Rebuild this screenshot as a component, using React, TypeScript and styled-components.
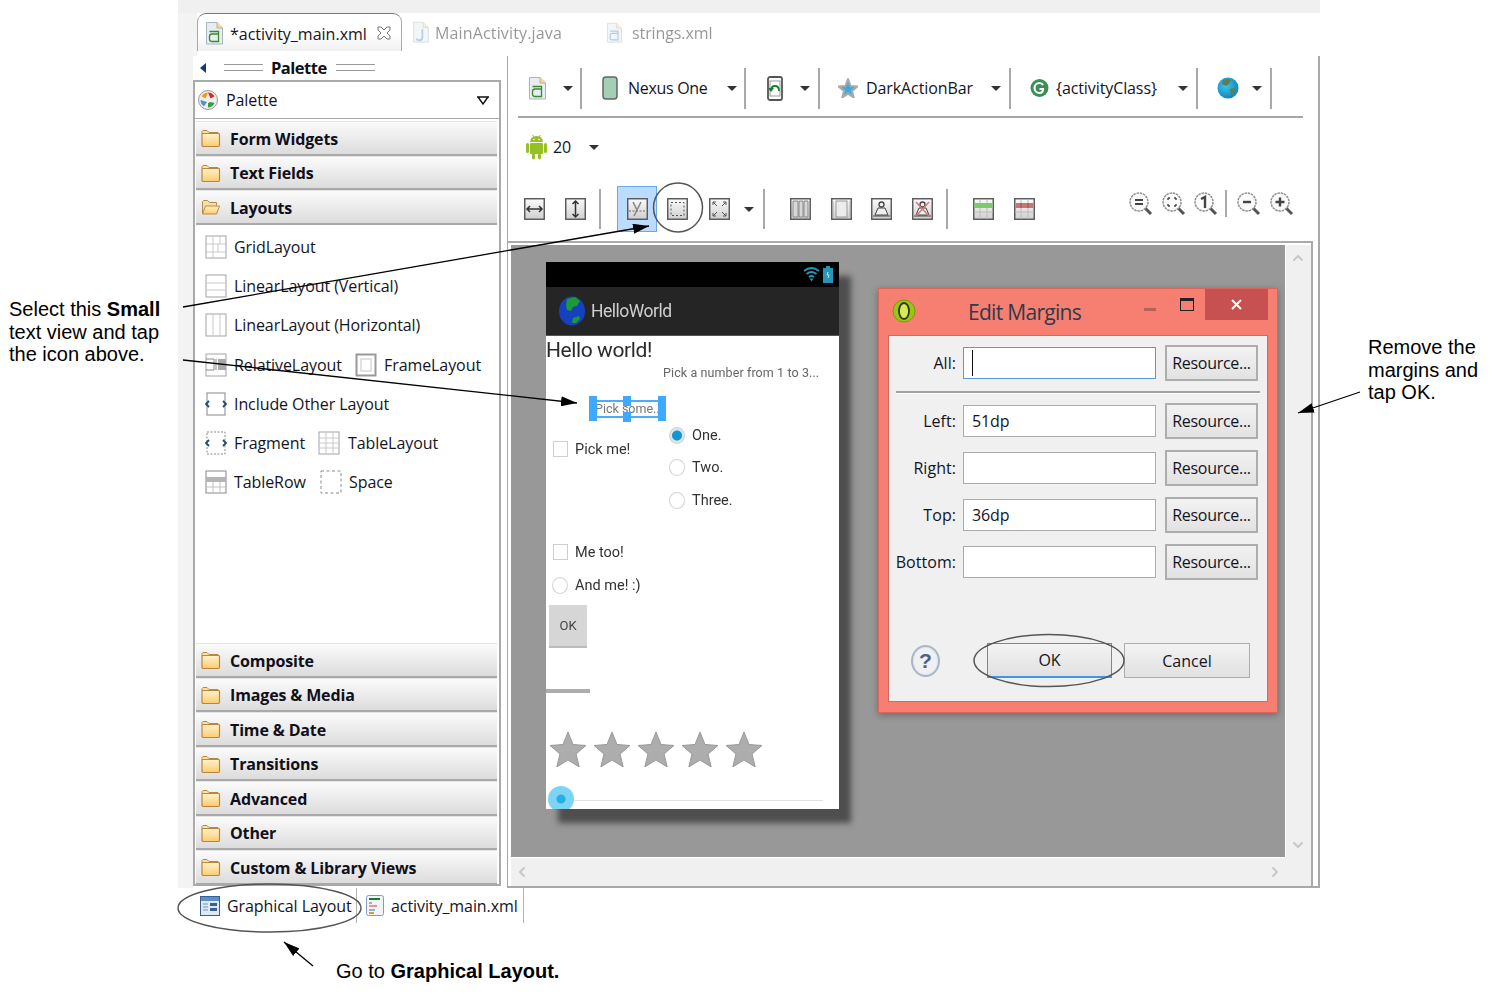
import React from "react";
import styled, { createGlobalStyle } from "styled-components";
import { ChevronUp, ChevronDown, ChevronLeft, ChevronRight } from "lucide-react";

const UI = `"Open Sans", "Noto Sans", sans-serif`;
const Global = createGlobalStyle`
  html, body { margin: 0; padding: 0; background: #fff; }
  body { font-family: ${UI}; color: #14141e; }
  * { box-sizing: border-box; }
`;

const Page = styled.div`
  position: relative; width: 1502px; height: 995px; overflow: hidden; padding-left: 178px;
`;
const Figure = styled.div`width: 1142px; display: flex; flex-direction: column;`;
const TopStrip = styled.div`height: 13px; background: #f0f0f0;`;
const TabBar = styled.div`height: 43px; display: flex; background: #f3f3f3; padding-left: 19px;`;
const TabStrip = styled.div`flex: 1; display: flex; background: #fff; align-items: flex-start;`;
const ActiveTab = styled.div`
  width: 205px; height: 38px; display: flex; align-items: center; padding-left: 8px;
  border: 1px solid #777; border-color: #777 #aaa transparent; border-bottom: 0; border-radius: 9px 9px 0 0;
  background: linear-gradient(#fff 55%, #f0f0f0);
`;
const TabTitle = styled.span`
  font-size: 16px; letter-spacing: ${p => p.$ls ?? 0}px; white-space: nowrap; margin-left: ${p => p.$ml ?? 7}px; width: ${p => p.$w}px;
  line-height: 38px; padding-top: 2px;
`;
const CloseMark = styled.span`display: flex; margin-left: 10px;`;
const InactiveTab = styled.div`
  display: flex; align-items: center; height: 38px; margin-left: ${p => p.$ml}px; opacity: .45;
`;
const Workbench = styled.div`
  height: 832px; display: flex; background: #f3f3f3; padding-left: 15px;
`;
const PalettePane = styled.div`width: 314px; background: #fff; display: flex; flex-direction: column;`;
const PaletteHead = styled.div`height: 24px; display: flex; align-items: center; padding: 0 0 1px 7px;`;
const Ribbon = styled.span`
  display: block; flex: none; width: 39px; height: 7px; margin-left: ${p => p.$ml}px;
  border-top: 1px solid #999; border-bottom: 1px solid #999;
`;
const PaletteTitle = styled.span`font-size: 16.5px; font-weight: 700; letter-spacing: -0.5px; margin-left: 8px; width: 57px; color: #101018;`;
const PaletteBox = styled.div`
  width: 308px; height: 806px; border: 2px solid #aaa;
  display: flex; flex-direction: column;
`;
const Selector = styled.div`
  height: 37px; flex: none; display: flex; align-items: center; padding: 0 9px 0 3px; border-bottom: 1px solid #aaa; margin-bottom: 2px;
`;
const SelectorText = styled.span`flex: 1; font-size: 16px; letter-spacing: -0.08px; margin-left: 8px;`;
const Category = styled.div`
  height: 34.5px; flex: none; display: flex; align-items: center; padding: 2px 0 0 5px;
  margin: 0 2px 0 1px; border-bottom: 2px solid #a9a9a9; border-top: 1px solid #e4e4e4;
  background: linear-gradient(#fbfbfb, #dcdcdc);
`;
const CategoryText = styled.span`font-size: 16px; font-weight: 700; letter-spacing: -0.14px; margin-left: 9px; color: #10101a;`;
const Items = styled.div`height: 418.5px; flex: none; padding: 3px 0 0 10px; display: flex; flex-direction: column;`;
const ItemRow = styled.div`height: 39.2px; flex: none; display: flex; align-items: center;`;
const ItemText = styled.span`
  font-size: 16px; letter-spacing: -0.08px; margin-left: ${p => p.$ml ?? 7}px; width: ${p => p.$w ?? "auto"}; white-space: nowrap;
`;
const ItemIcon = styled.span`display: flex; margin-left: ${p => p.$ml ?? 0}px;`;

const Editor = styled.div`
  width: 813px; background: #fff; border-left: 1px solid #a8a8a8; border-right: 2px solid #a8a8a8; border-bottom: 2px solid #a8a8a8;
  display: flex; flex-direction: column;
`;
const ToolRowOne = styled.div`
  height: 53px; margin-top: 7px; padding: 0 0 3px 21px; display: flex; align-items: center;
`;
const Rule = styled.div`height: 2px; flex: none; margin: 0 15px 0 10px; background: #a6a6a6;`;
const ToolRowTwo = styled.div`height: 58px; flex: none; padding: 0 0 0 17px; display: flex; align-items: center;`;
const ToolRowThree = styled.div`height: 65px; display: flex; align-items: center; padding: 1px 0 0 7px; flex: none;`;
const Cell = styled.span`display: flex; align-items: center; justify-content: center; margin-left: ${p => p.$ml ?? 0}px;`;
const Slot = styled.span`
  display: flex; align-items: center; justify-content: center; flex: none; width: ${p => p.$w ?? 40}px; margin-left: ${p => p.$ml ?? 0}px;
`;
const SelectedSlot = styled(Slot)`
  height: 46px; background: #bcdcff; border: 1px solid #6aa9ea;
`;
const ToolLabel = styled.span`
  font-size: 16px; letter-spacing: ${p => p.$ls ?? -0.1}px; white-space: nowrap; margin-left: ${p => p.$ml}px; width: ${p => p.$w}px;
`;
const Caret = styled.span`
  flex: none; width: 0; height: 0; margin-left: ${p => p.$ml}px;
  border-left: 5px solid transparent; border-right: 5px solid transparent; border-top: 5px solid #333;
`;
const Sep = styled.span`
  flex: none; width: 2px; height: ${p => p.$h ?? 41}px; background: #a9a9a9; margin-left: ${p => p.$ml}px;
`;
const ZoomGroup = styled.div`display: flex; align-items: center; margin: 0 0 11px 0; height: 30px;`;
const CanvasFrame = styled.div`
  width: 805px; height: 645px; flex: none; border-top: 2px solid #aaa; border-right: 2px solid #aaa; padding: 2px 0 0 3px; background: #fff;
`;
const CanvasGrid = styled.div`
  display: grid; grid-template-columns: 775px 24px; grid-template-rows: 613px 28px; background: #f0f0f0; height: 100%;
`;
const Canvas = styled.div`
  grid-column: 1; grid-row: 1;
  background: #989898; display: flex; align-items: flex-start; padding: 17px 0 0 35px; gap: 39px;
  border-right: 1px solid #fff; border-bottom: 1px solid #fff;
`;
const VScroll = styled.div`
  grid-column: 2; grid-row: 1 / span 2; display: flex; flex-direction: column; justify-content: space-between; align-items: center; padding: 5px 1px 33px 0; color: #c8c8c8;
`;
const HScroll = styled.div`
  grid-column: 1; grid-row: 2; display: flex; align-items: center; justify-content: space-between; padding: 0 3px 0 3px; color: #c8c8c8;
`;

/* phone */
const Phone = styled.div`
  width: 293px; height: 547px; flex: none; box-shadow: 12px 14px 6px #4e4e4e;
`;
const Screen = styled.div`
  width: 293px; height: 547px; overflow: hidden; background: #fff; filter: blur(.35px); display: flex; flex-direction: column;
  font-family: Roboto, "Liberation Sans", sans-serif;
`;
const StatusBar = styled.div`
  height: 25px; flex: none; background: #000; display: flex; justify-content: flex-end; align-items: center; padding-right: 6px; gap: 3px;
`;
const ActionBar = styled.div`
  height: 49px; flex: none; background: #252525; border-bottom: 1px solid #555; display: flex; align-items: center; padding-left: 13px;
`;
const ActionTitle = styled.span`color: #cfcfcf; font-size: 17.5px; margin-left: 6px; letter-spacing: -0.5px;`;
const Hello = styled.div`height: 28px; flex: none; font-size: 21px; line-height: 28px; color: #2a2a2a; letter-spacing: -0.4px; white-space: nowrap;`;
const Hint = styled.div`height: 16px; flex: none; padding-left: 117px; font-size: 12.5px; line-height: 18px; color: #666; letter-spacing: .1px; white-space: nowrap;`;
const Selected = styled.div`
  position: relative; flex: none; width: 76px; height: 25px; margin: 16px 0 0 43px; display: flex; align-items: center; padding-left: 6px;
  font-size: 12.5px; color: #777; white-space: nowrap;
  &::before { content: ""; position: absolute; left: 1px; right: 1px; top: 4px; bottom: 3px; border: 2px solid #48aefc; }
`;
const Handle = styled.span`
  position: absolute; background: #3fa9ff; width: 8px;
  left: ${p => p.$x}px; top: ${p => p.$y}px; height: ${p => p.$h}px;
`;
const Columns = styled.div`height: 97.5px; flex: none; display: flex;`;
const LeftColumn = styled.div`width: 123px; padding: 14px 0 0 7px;`;
const RightColumn = styled.div`display: flex; flex-direction: column; gap: 4.5px;`;
const Choice = styled.div`
  height: 28px; flex: none; display: flex; align-items: center; margin-left: ${p => p.$ml ?? 0}px; margin-top: ${p => p.$mt ?? 0}px;
  font-size: 14.5px; color: #333; white-space: nowrap;
`;
const Check = styled.span`flex: none; width: 15px; height: 16px; border: 1px solid #cfcfcf; margin-right: 7px;`;
const Radio = styled.span`
  flex: none; width: 16px; height: 17px; border-radius: 50%; border: 1px solid #d2d2d2; margin-right: ${p => p.$mr}px;
  background: ${p => p.$on ? "radial-gradient(circle, #1396cf 0 4.5px, #d8e6ee 5.5px)" : "#fff"};
`;
const PhoneButton = styled.div`
  flex: none; width: 38px; height: 43px; margin: 6px 0 0 3px; background: #d6d6d6; border-bottom: 2px solid #bbb;
  display: flex; align-items: center; justify-content: center; font-size: 13px; color: #444;
`;
const Progress = styled.div`flex: none; width: 44px; height: 4px; margin-top: 41px; background: #acacac;`;
const Stars = styled.div`flex: none; display: flex; margin: 38px 0 0 4px; gap: 8px;`;
const Seek = styled.div`position: relative; flex: none; height: 26px; margin: 19px 0 0 2px;`;
const SeekTrack = styled.div`position: absolute; left: 13px; width: 262px; top: 14px; height: 1px; background: #e2e2e2;`;
const SeekThumb = styled.div`
  position: absolute; left: 0; top: 0; width: 26px; height: 26px; border-radius: 50%;
  background: radial-gradient(circle, #27aee8 0 4px, #7dd3f2 5px);
`;

/* dialog */
const Dialog = styled.div`
  width: 400px; height: 425px; flex: none; margin-top: 26px; background: #f77f72; border: 1px solid #d9655b; box-shadow: 0 2px 7px rgba(0,0,0,.3);
  display: flex; flex-direction: column;
`;
const TitleBar = styled.div`height: 46px; flex: none; display: flex; align-items: flex-start; padding-left: 13px;`;
const TitleIcon = styled.span`display: flex; margin-top: 10px;`;
const DialogTitle = styled.span`
  font-size: 21px; letter-spacing: -0.7px; color: #2f3a4a; width: 176px; margin: 5px 0 0 52px; white-space: nowrap; line-height: 36px;
`;
const WinMin = styled.span`flex: none; width: 12px; height: 3px; background: #b8605a; margin: 19px 0 0 0;`;
const WinMax = styled.span`flex: none; width: 14px; height: 13px; border: 1px solid #222; border-top-width: 3px; margin: 9px 0 0 24px;`;
const WinClose = styled.span`
  flex: none; width: 63px; height: 31px; background: #c75050; margin-left: 11px; display: flex; align-items: center; justify-content: center;
`;
const DialogBody = styled.div`
  flex: 1; margin: 0 9px 10px 9px; background: #f0f0f0; border: 1px solid #cf6a60; padding-top: 9px; display: flex; flex-direction: column;
`;
const FieldRow = styled.div`height: 36px; flex: none; display: flex; align-items: center; margin-bottom: ${p => p.$mb ?? 11}px;`;
const FieldLabel = styled.span`width: 67px; text-align: right; font-size: 16px; letter-spacing: 0.05px; white-space: nowrap;`;
const FieldInput = styled.div`
  width: 193px; height: 32px; margin-left: 7px; background: #fff; border: 1px solid ${p => p.$focus ? "#5b9bd5" : "#ababab"};
  padding-left: 8px; font-size: 16px; letter-spacing: -0.1px; display: flex; align-items: center;
`;
const TextCaret = styled.span`display: block; width: 1px; height: 26px; background: #111;`;
const ResourceButton = styled.div`
  width: 93px; height: 36px; margin-left: 9px; border: 2px solid #adadad; background: linear-gradient(#f2f2f2, #e2e2e2);
  display: flex; align-items: center; justify-content: center; font-size: 16px; letter-spacing: -0.3px;
`;
const Divider = styled.div`height: 3px; flex: none; margin: 10px 7px 9px; border-top: 2px solid #a0a0a0; border-bottom: 1px solid #fff;`;
const ButtonRow = styled.div`display: flex; align-items: center; margin-top: 63px; padding-left: 22px;`;
const Help = styled.span`
  width: 29px; height: 32px; border-radius: 50%; border: 2px solid #a9b6c8; box-shadow: inset 0 0 0 1px #dfe6ef;
  display: flex; align-items: center; justify-content: center; font: 700 21px "Liberation Sans", sans-serif; color: #4c6186;
`;
const DialogButton = styled.div`
  width: ${p => p.$w}px; height: 35px; margin-left: ${p => p.$ml}px; border: 1px solid ${p => p.$primary ? "#3d95ee" : "#adadad"};
  border-bottom-width: ${p => p.$primary ? 2 : 1}px;
  background: linear-gradient(#f3f3f3, #e1e1e1); display: flex; align-items: center; justify-content: center; font-size: 16px;
`;

/* bottom tabs */
const BottomTabs = styled.div`height: 35px; padding-left: 22px; display: flex; align-items: stretch;`;
const BottomTab = styled.div`
  display: flex; align-items: center; width: ${p => p.$w}px; padding-left: ${p => p.$pl}px; border-right: 1px solid #b5b5b5;
`;
const BottomLabel = styled.span`font-size: 16px; letter-spacing: -0.08px; margin-left: 7px; white-space: nowrap;`;

/* annotations */
const Callout = styled.div`
  position: absolute; left: ${p => p.$x}px; top: ${p => p.$y}px; font: 20px/22.5px "Liberation Sans", Arial, sans-serif; color: #000; white-space: nowrap;
  b { font-weight: 700; }
`;
const Overlay = styled.svg`position: absolute; left: 0; top: 0; pointer-events: none;`;

/* icons */
const Folder = ({ open }: { open?: boolean }) => (
  <svg width="20" height="21" viewBox="0 0 20 21">
    <defs><linearGradient id="fg" x1="0" y1="0" x2="0" y2="1"><stop offset="0" stopColor="#fff3cc" /><stop offset="1" stopColor="#fccb70" /></linearGradient></defs>
    {open ? <>
      <path d="M1.5 17V4.5l1-1h4l2 2h7v3" fill="#f4dfa9" stroke="#b98a48" />
      <path d="M1.5 17l3-8h14l-3 8z" fill="url(#fg)" stroke="#b98a48" />
    </> : <>
      <path d="M1 6V3.5l1-1h4l2 2h9l1 1V8z" fill="#f8e2ab" stroke="#bd853b" />
      <rect x="1" y="5.5" width="17.5" height="13" rx="1.2" fill="url(#fg)" stroke="#bd853b" strokeWidth="1.2" />
    </>}
  </svg>
);
const Doc = ({ color = "#3b8a2e", w = 17, h = 24, j }: { color?: string; w?: number; h?: number; j?: boolean }) => (
  <svg width={w} height={h} viewBox="0 0 17 24">
    <path d="M.5 1.5h10.5l5.500 5.500v16H.5z" fill="#e6edf3" stroke="#a9b5bd" />
    <path d="M11 1.500v5.500h5.500" fill="#f4d7b0" stroke="#d9a873" />
    {j ? <path d="M10 9v9q0 3-3 3t-3-2" fill="none" stroke="#6f93bd" strokeWidth="2" /> :
      <path d="M3.500 10.500h9v10H6q-2.500 0-2.500-2.500v-2.500Q3.500 13 6 13h6.500" fill="none" stroke={color} strokeWidth="1.300" />}
  </svg>
);
const Box = ({ children }: { children?: React.ReactNode }) => (
  <svg width="21" height="22" viewBox="0 0 21 22">
    <defs><linearGradient id="bx" x1="0" y1="0" x2="0" y2="1"><stop offset="0" stopColor="#fbfbfb" /><stop offset="1" stopColor="#cfcfcf" /></linearGradient></defs>
    <rect x=".75" y=".75" width="19.500" height="20.500" fill="url(#bx)" stroke="#555" strokeWidth="1.400" />
    {children}
  </svg>
);
const Mag = ({ children }: { children?: React.ReactNode }) => (
  <svg width="24" height="24" viewBox="0 0 24 24">
    <path d="M15 15l7 7" stroke="#555" strokeWidth="3" />
    <circle cx="10" cy="10" r="9" fill="#fafafa" stroke="#8d8d8d" strokeWidth="1.500" strokeDasharray="2.500 .8" />
    {children}
  </svg>
);
const Plain = ({ children }: { children: React.ReactNode }) => (
  <svg width="22" height="24" viewBox="0 0 22 24" fill="none" stroke="#a3a3a3">{children}</svg>
);
const Star = ({ s = 36, fill = "#adadad", line = "#999" }: { s?: number; fill?: string; line?: string }) => (
  <svg width={s} height={s} viewBox="0 0 36 36"><path d="M18 1l5 12.500 13 1-10 8.500 3.200 13L18 29 6.800 36 10 23 0 14.500l13-1z" fill={fill} stroke={line} /></svg>
);
const GlobeBlue = () => (
  <svg width="22" height="24" viewBox="0 0 22 24">
    <defs><radialGradient id="gl" cx=".4" cy=".4" r=".7"><stop offset="0" stopColor="#3fc4ea" /><stop offset="1" stopColor="#0a7fb8" /></radialGradient></defs>
    <circle cx="11" cy="12" r="10.500" fill="url(#gl)" />
    <path d="M6 4q4-2 8 0l-2 4-3 2-4-2zM13 13l5-1-1 5-3 3z" fill="#5f7f52" />
  </svg>
);
const Android = () => (
  <svg width="23" height="26" viewBox="0 0 23 26" fill="#97c024">
    <path d="M5 8q.5-6 6.500-6T18 8z" />
    <path d="M7.500 1l1.500 2M15.500 1L14 3" stroke="#97c024" />
    <rect x="5" y="9" width="13" height="11" rx="1" />
    <rect x="1" y="9" width="3" height="10" rx="1.500" />
    <rect x="19" y="9" width="3" height="10" rx="1.500" />
    <rect x="7" y="19" width="3" height="6.500" rx="1.400" />
    <rect x="13" y="19" width="3" height="6.500" rx="1.400" />
    <circle cx="9" cy="5.500" r=".8" fill="#fff" /><circle cx="14" cy="5.500" r=".8" fill="#fff" />
  </svg>
);

const categoriesBottom = ["Composite", "Images & Media", "Time & Date", "Transitions", "Advanced", "Other", "Custom & Library Views"];

export default function App() {
  return (
    <Page>
      <Global />
      <Figure>
        <TopStrip />
        <TabBar>
          <TabStrip>
            <ActiveTab>
              <Doc />
              <TabTitle>*activity_main.xml</TabTitle>
              <CloseMark>
                <svg width="14" height="14" viewBox="0 0 14 14"><path d="M1 1h3l3 3 3-3h3v3l-3 3 3 3v3h-3l-3-3-3 3H1v-3l3-3-3-3z" fill="#fff" stroke="#777" /></svg>
              </CloseMark>
            </ActiveTab>
            <InactiveTab $ml={11}><Doc j w={16} h={22} /><TabTitle $ml={6} $w={127} $ls={0.15}>MainActivity.java</TabTitle></InactiveTab>
            <InactiveTab $ml={45}><Doc w={15} h={21} color="#5a8ac0" /><TabTitle $ml={10} $w={80} $ls={-0.1}>strings.xml</TabTitle></InactiveTab>
          </TabStrip>
        </TabBar>
        <Workbench>
          <PalettePane>
            <PaletteHead>
              <svg width="7" height="12" viewBox="0 0 7 12"><path d="M6 1v10L0 6z" fill="#103d6e" /></svg>
              <Ribbon $ml={17} />
              <PaletteTitle>Palette</PaletteTitle>
              <Ribbon $ml={8} />
            </PaletteHead>
            <PaletteBox>
              <Selector>
                <svg width="20" height="20" viewBox="0 0 20 20">
                  <circle cx="10" cy="10" r="9.500" fill="#eee" stroke="#999" />
                  <path d="M10 2.500a7.500 7.500 0 00-6.500 3.800l4 2.200z" fill="#e8a010" /><path d="M10 2.500a7.500 7.500 0 016.500 3.800l-4 2.200z" fill="#d9281e" />
                  <path d="M2.500 10a7.500 7.500 0 003.500 6.300l3-4.300z" fill="#4f8fd0" /><path d="M10 17.500a7.500 7.500 0 006.500-4.500l-4-1-2.500 1z" fill="#35a035" />
                </svg>
                <SelectorText>Palette</SelectorText>
                <svg width="14" height="9" viewBox="0 0 14 9"><path d="M1 1h12M2 1l5 7 5-7" fill="none" stroke="#111" strokeWidth="1.400" /></svg>
              </Selector>
              <Category><Folder /><CategoryText>Form Widgets</CategoryText></Category>
              <Category><Folder /><CategoryText>Text Fields</CategoryText></Category>
              <Category><Folder open /><CategoryText>Layouts</CategoryText></Category>
              <Items>
                <ItemRow>
                  <Plain><rect x="1" y="1" width="20" height="22" /><path d="M1 9h20M1 17h20M8 1v22M15 1v8M13 9v8" stroke="#c9c9c9" /></Plain>
                  <ItemText>GridLayout</ItemText>
                </ItemRow>
                <ItemRow>
                  <Plain><rect x="1" y="1" width="20" height="22" /><path d="M1 9h20M1 16h20" stroke="#c9c9c9" /></Plain>
                  <ItemText>LinearLayout (Vertical)</ItemText>
                </ItemRow>
                <ItemRow>
                  <Plain><rect x="1" y="1" width="20" height="22" /><path d="M8 1v22M15 1v22" stroke="#c9c9c9" /></Plain>
                  <ItemText>LinearLayout (Horizontal)</ItemText>
                </ItemRow>
                <ItemRow>
                  <Plain><rect x="1" y="1" width="20" height="22" /><rect x="13" y="6" width="8" height="11" fill="#a9a9a9" stroke="none" /><path d="M1 6h8v11H1M11 6v11" stroke="#8a8a8a" /></Plain>
                  <ItemText $w="121px">RelativeLayout</ItemText>
                  <ItemIcon><Plain><rect x="1.500" y="1.500" width="19" height="21" strokeWidth="2" stroke="#999" /><rect x="6" y="6" width="10" height="12" stroke="#c6c6c6" /></Plain></ItemIcon>
                  <ItemText>FrameLayout</ItemText>
                </ItemRow>
                <ItemRow>
                  <Plain><rect x="2" y="1" width="18" height="22" stroke="#888" /><path d="M4 9l-3 3 3 3M18 9l3 3-3 3" stroke="#1f4a66" strokeWidth="1.800" /></Plain>
                  <ItemText>Include Other Layout</ItemText>
                </ItemRow>
                <ItemRow>
                  <Plain><rect x="2" y="1" width="18" height="22" strokeDasharray="2 1.500" stroke="#888" /><path d="M4 9l-3 3 3 3M18 9l3 3-3 3" stroke="#1f4a66" strokeWidth="1.800" /></Plain>
                  <ItemText $w="84px">Fragment</ItemText>
                  <ItemIcon><Plain><rect x="1" y="1" width="20" height="22" /><path d="M1 7h20M1 12h20M1 17h20M8 1v22M15 1v22" stroke="#c9c9c9" /></Plain></ItemIcon>
                  <ItemText $ml={8}>TableLayout</ItemText>
                </ItemRow>
                <ItemRow>
                  <Plain><rect x="1" y="1" width="20" height="22" stroke="#888" /><rect x="1" y="7" width="20" height="5" fill="#b4b4b4" stroke="none" /><path d="M1 17h20M8 12v11M15 12v11" stroke="#c0c0c0" /></Plain>
                  <ItemText $w="86px">TableRow</ItemText>
                  <ItemIcon><Plain><rect x="1" y="1" width="20" height="22" strokeDasharray="3 2.500" stroke="#888" /></Plain></ItemIcon>
                  <ItemText>Space</ItemText>
                </ItemRow>
              </Items>
              {categoriesBottom.map(c => (
                <Category key={c}><Folder /><CategoryText>{c}</CategoryText></Category>
              ))}
            </PaletteBox>
          </PalettePane>
          <Editor>
            <ToolRowOne>
              <Cell><Doc /></Cell>
              <Caret $ml={17} /><Sep $ml={7} />
              <Cell $ml={20}>
                <svg width="16" height="24" viewBox="0 0 16 24"><rect x="1" y="1" width="14" height="22" rx="3" fill="#a5cfb4" stroke="#666" strokeWidth="1.500" /></svg>
              </Cell>
              <ToolLabel $ml={10} $w={80} $ls={-0.3}>Nexus One</ToolLabel>
              <Caret $ml={19} /><Sep $ml={7} />
              <Cell $ml={21}>
                <svg width="16" height="25" viewBox="0 0 16 25" fill="none"><rect x="1" y="1" width="14" height="23" rx="2" stroke="#555" strokeWidth="1.800" /><rect x="3" y="5" width="10" height="15" stroke="#999" /><path d="M12 15q0-5-4-5t-4 5" stroke="#16812a" strokeWidth="1.800" /><path d="M1 12l3 4 3-4z" fill="#16812a" /></svg>
              </Cell>
              <Caret $ml={17} /><Sep $ml={8} />
              <Cell $ml={18}>
                <svg width="20" height="20" viewBox="0 0 36 36"><path d="M18 3l4.500 11.500 11.500 1-9 7.500 3 11.500L18 28 8 34.500l3-11.500-9-7.500 11.500-1z" fill="#3fa9dc" stroke="#a3aab0" strokeWidth="4" /></svg>
              </Cell>
              <ToolLabel $ml={8} $w={106}>DarkActionBar</ToolLabel>
              <Caret $ml={19} /><Sep $ml={8} />
              <Cell $ml={19}>
                <svg width="19" height="20" viewBox="0 0 19 20"><circle cx="9.500" cy="10" r="9" fill="#3a8f55" /><path d="M13 7q-1-2-3.500-2a5 5 0 100 10q3.500 0 3.500-4H9.500" fill="none" stroke="#fff" strokeWidth="2.200" /></svg>
              </Cell>
              <ToolLabel $ml={7} $w={103}>{"{activityClass}"}</ToolLabel>
              <Caret $ml={19} /><Sep $ml={8} />
              <Cell $ml={19}><GlobeBlue /></Cell>
              <Caret $ml={13} /><Sep $h={41} $ml={8} />
            </ToolRowOne>
            <Rule />
            <ToolRowTwo>
              <Cell><Android /></Cell>
              <ToolLabel $ml={5} $w={20}>20</ToolLabel>
              <Caret $ml={16} />
            </ToolRowTwo>
            <ToolRowThree>
              <Slot $w={39}><Box><path d="M3 11h15M6 8l-3 3 3 3M15 8l3 3-3 3" fill="none" stroke="#333" strokeWidth="1.500" /></Box></Slot>
              <Slot $ml={1}><Box><path d="M10.500 3v16M7.500 6l3-3 3 3M7.500 16l3 3 3-3" fill="none" stroke="#333" strokeWidth="1.500" /></Box></Slot>
              <Sep $h={40} $ml={4} />
              <SelectedSlot $ml={16}><Box><path d="M6 4l4 8M14 4l-7 14" fill="none" stroke="#888" strokeWidth="1.600" /><path d="M2 13h17" stroke="#666" strokeDasharray="2 1.500" /></Box></SelectedSlot>
              <Slot><Box><rect x="4" y="4.500" width="13" height="13" fill="none" stroke="#555" strokeDasharray="2 2" /></Box></Slot>
              <Slot $ml={2}><Box><path d="M4 4l4 4M17 4l-4 4M4 18l4-4M17 18l-4-4M4 4h3M4 4v3M17 4h-3M17 4v3M4 18h3M4 18v-3M17 18h-3M17 18v-3" fill="none" stroke="#555" /></Box></Slot>
              <Caret $ml={5} /><Sep $h={40} $ml={9} />
              <Slot $ml={15}><Box><path d="M3 3h5v16H3zM9 3h4v16H9zM14 3h4v16h-4z" fill="#d8d8d8" stroke="#888" /></Box></Slot>
              <Slot $ml={1}><Box><rect x="5" y="3" width="11" height="16" fill="#ececec" stroke="#999" /><path d="M2 3v16M19 3v16" stroke="#aaa" /></Box></Slot>
              <Slot><Box><circle cx="10.500" cy="6.500" r="2.500" fill="none" stroke="#444" strokeWidth="1.300" /><path d="M4 17l3-7h7l3 7zM2 18h17" fill="#eee" stroke="#444" /></Box></Slot>
              <Slot $ml={1}><Box><circle cx="10.500" cy="6.500" r="2.500" fill="none" stroke="#444" strokeWidth="1.300" /><path d="M4 17l3-7h7l3 7zM2 18h17" fill="#eee" stroke="#444" /><path d="M4 4l13 14M17 4L4 18" stroke="#d07878" strokeWidth="1.500" /></Box></Slot>
              <Sep $h={40} $ml={4} />
              <Slot $ml={15}><Box><path d="M1 7h19M1 14h19M7 1v20M14 1v20" stroke="#bbb" /><rect x="1.500" y="5" width="18" height="5" fill="#7cca6c" /></Box></Slot>
              <Slot $ml={1}><Box><path d="M1 7h19M1 14h19M7 1v20M14 1v20" stroke="#bbb" /><rect x="1.500" y="5" width="18" height="5" fill="#cf7272" /><path d="M7 5v5M14 5v5" stroke="#666" /></Box></Slot>
              <Slot $ml={85} $w={24}>
                <ZoomGroup><Mag><path d="M6 8h8M6 12h8" stroke="#444" strokeWidth="2" /></Mag></ZoomGroup>
              </Slot>
              <Slot $ml={9} $w={24}>
                <ZoomGroup><Mag><path d="M6 6h2M12 6h2M6 14h2M12 14h2M6 6v2M14 6v2M6 12v2M14 12v2" stroke="#444" strokeWidth="1.400" /></Mag></ZoomGroup>
              </Slot>
              <Slot $ml={8} $w={24}>
                <ZoomGroup><Mag><path d="M7 7l4-2v11" fill="none" stroke="#444" strokeWidth="2.400" /></Mag></ZoomGroup>
              </Slot>
              <Slot $ml={7} $w={2}><ZoomGroup><Sep $h={27} $ml={0} /></ZoomGroup></Slot>
              <Slot $ml={10} $w={24}>
                <ZoomGroup><Mag><path d="M6 10h8" stroke="#444" strokeWidth="2.400" /></Mag></ZoomGroup>
              </Slot>
              <Slot $ml={9} $w={24}>
                <ZoomGroup><Mag><path d="M5.500 10h9M10 5.500v9" stroke="#444" strokeWidth="2.400" /></Mag></ZoomGroup>
              </Slot>
            </ToolRowThree>
            <CanvasFrame>
              <CanvasGrid>
                <Canvas>
                  <Phone>
                    <Screen>
                      <StatusBar>
                        <svg width="17" height="15" viewBox="0 0 17 15" fill="none" stroke="#2596b8" strokeWidth="1.800"><path d="M1 4q7.500-6 15 0M3.500 7q5-4 10 0M6 10q2.500-2 5 0" /><path d="M6.500 11.500h4L8.500 14.500z" fill="#2596b8" stroke="none" /></svg>
                        <svg width="10" height="17" viewBox="0 0 10 17"><path d="M3 0h4v2h3v15H0V2h3z" fill="#2596b8" /><path d="M5 6l-1 3h2l-1 3" stroke="#bfe6f2" fill="none" /></svg>
                      </StatusBar>
                      <ActionBar>
                        <svg width="26" height="30" viewBox="0 0 26 30">
                          <ellipse cx="13" cy="15" rx="13" ry="14.500" fill="#1540c0" />
                          <path d="M8 3l8-2 5 4-3 5-4 1-2 4-4-1-1-5zM14 22l6-2 1 3-4 4-4 0z" fill="#1d9a33" />
                        </svg>
                        <ActionTitle>HelloWorld</ActionTitle>
                      </ActionBar>
                      <Hello>Hello world!</Hello>
                      <Hint>Pick a number from 1 to 3...</Hint>
                      <Selected>
                        Pick some..
                        <Handle $x={0} $y={0} $h={25} /><Handle $x={34} $y={0} $h={10} /><Handle $x={34} $y={16} $h={10} /><Handle $x={69} $y={0} $h={25} />
                      </Selected>
                      <Columns>
                        <LeftColumn><Choice><Check />Pick me!</Choice></LeftColumn>
                        <RightColumn>
                          <Choice><Radio $on $mr={7} />One.</Choice>
                          <Choice><Radio $mr={7} />Two.</Choice>
                          <Choice><Radio $mr={7} />Three.</Choice>
                        </RightColumn>
                      </Columns>
                      <Choice $ml={7} $mt={19.5}><Check />Me too!</Choice>
                      <Choice $ml={6} $mt={5}><Radio $mr={7} />And me! :)</Choice>
                      <PhoneButton>OK</PhoneButton>
                      <Progress />
                      <Stars><Star /><Star /><Star /><Star /><Star /></Stars>
                      <Seek><SeekTrack /><SeekThumb /></Seek>
                    </Screen>
                  </Phone>
                  <Dialog>
                    <TitleBar>
                      <TitleIcon>
                        <svg width="24" height="24" viewBox="0 0 24 24"><circle cx="12" cy="12" r="11" fill="#9cc414" stroke="#7a9a10" /><ellipse cx="12" cy="12" rx="5" ry="8" fill="#d9e85a" stroke="#2b3a10" strokeWidth="1.800" /></svg>
                      </TitleIcon>
                      <DialogTitle>Edit Margins</DialogTitle>
                      <WinMin />
                      <WinMax />
                      <WinClose>
                        <svg width="11" height="11" viewBox="0 0 11 11"><path d="M1 1l9 9M10 1l-9 9" stroke="#fff" strokeWidth="2" /></svg>
                      </WinClose>
                    </TitleBar>
                    <DialogBody>
                      <FieldRow $mb={0}><FieldLabel>All:</FieldLabel><FieldInput $focus><TextCaret /></FieldInput><ResourceButton>Resource...</ResourceButton></FieldRow>
                      <Divider />
                      <FieldRow><FieldLabel>Left:</FieldLabel><FieldInput>51dp</FieldInput><ResourceButton>Resource...</ResourceButton></FieldRow>
                      <FieldRow><FieldLabel>Right:</FieldLabel><FieldInput /><ResourceButton>Resource...</ResourceButton></FieldRow>
                      <FieldRow><FieldLabel>Top:</FieldLabel><FieldInput>36dp</FieldInput><ResourceButton>Resource...</ResourceButton></FieldRow>
                      <FieldRow $mb={0}><FieldLabel>Bottom:</FieldLabel><FieldInput /><ResourceButton>Resource...</ResourceButton></FieldRow>
                      <ButtonRow>
                        <Help>?</Help>
                        <DialogButton $primary $w={125} $ml={47}>OK</DialogButton>
                        <DialogButton $w={126} $ml={12}>Cancel</DialogButton>
                      </ButtonRow>
                    </DialogBody>
                  </Dialog>
                </Canvas>
                <VScroll><ChevronUp size={16} strokeWidth={3} /><ChevronDown size={16} strokeWidth={3} /></VScroll>
                <HScroll><ChevronLeft size={16} strokeWidth={3} /><ChevronRight size={16} strokeWidth={3} /></HScroll>
              </CanvasGrid>
            </CanvasFrame>
          </Editor>
        </Workbench>
        <BottomTabs>
          <BottomTab $w={157} $pl={0}>
            <svg width="20" height="20" viewBox="0 0 20 20"><rect x=".5" y=".5" width="19" height="19" fill="#dde9f6" stroke="#3a5f8c" /><rect x="1" y="1" width="18" height="4" fill="#5a8fd0" /><path d="M3 8h5M3 11h5M3 14h5" stroke="#6f93bd" /><rect x="10" y="7" width="7" height="3" fill="#3a5f8c" /><rect x="10" y="12" width="7" height="3" fill="#3a5f8c" /></svg>
            <BottomLabel>Graphical Layout</BottomLabel>
          </BottomTab>
          <BottomTab $w={167} $pl={9}>
            <svg width="18" height="21" viewBox="0 0 18 21"><rect x=".5" y=".5" width="17" height="20" rx="2" fill="#f1f5fa" stroke="#7f9cc0" /><path d="M3 4h11" stroke="#1c7a24" strokeWidth="2" /><path d="M3 8h3M3 11h8" stroke="#cf3b2a" /><path d="M3 15h6" stroke="#3c66b0" /><path d="M3 18h5" stroke="#d6a020" strokeWidth="2" /></svg>
            <BottomLabel>activity_main.xml</BottomLabel>
          </BottomTab>
        </BottomTabs>
      </Figure>

      <Callout $x={9} $y={298}>Select this <b>Small</b><br />text view and tap<br />the icon above.</Callout>
      <Callout $x={1368} $y={336}>Remove the<br />margins and<br />tap OK.</Callout>
      <Callout $x={336} $y={960}>Go to <b>Graphical Layout.</b></Callout>

      <Overlay width="1502" height="995" viewBox="0 0 1502 995" fill="none">
        <defs>
          <marker id="ah" viewBox="0 0 16 10" refX="16" refY="5" markerWidth="16" markerHeight="10" markerUnits="userSpaceOnUse" orient="auto">
            <path d="M0 0L16 5 0 10z" fill="#000" />
          </marker>
        </defs>
        <path d="M183 307L649 226" stroke="#000" strokeWidth="1.300" markerEnd="url(#ah)" />
        <path d="M183 360L577 403" stroke="#000" strokeWidth="1.300" markerEnd="url(#ah)" />
        <path d="M1360 392L1298 413" stroke="#000" strokeWidth="1.300" markerEnd="url(#ah)" />
        <path d="M313 966L284 942" stroke="#000" strokeWidth="1.300" markerEnd="url(#ah)" />
        <ellipse cx="678" cy="207.500" rx="24.500" ry="24.500" stroke="#555" strokeWidth="1.500" />
        <ellipse cx="1049" cy="660.500" rx="75" ry="26" stroke="#555" strokeWidth="1.500" />
        <ellipse cx="269.500" cy="908" rx="91.500" ry="24" stroke="#555" strokeWidth="1.500" />
      </Overlay>
    </Page>
  );
}
